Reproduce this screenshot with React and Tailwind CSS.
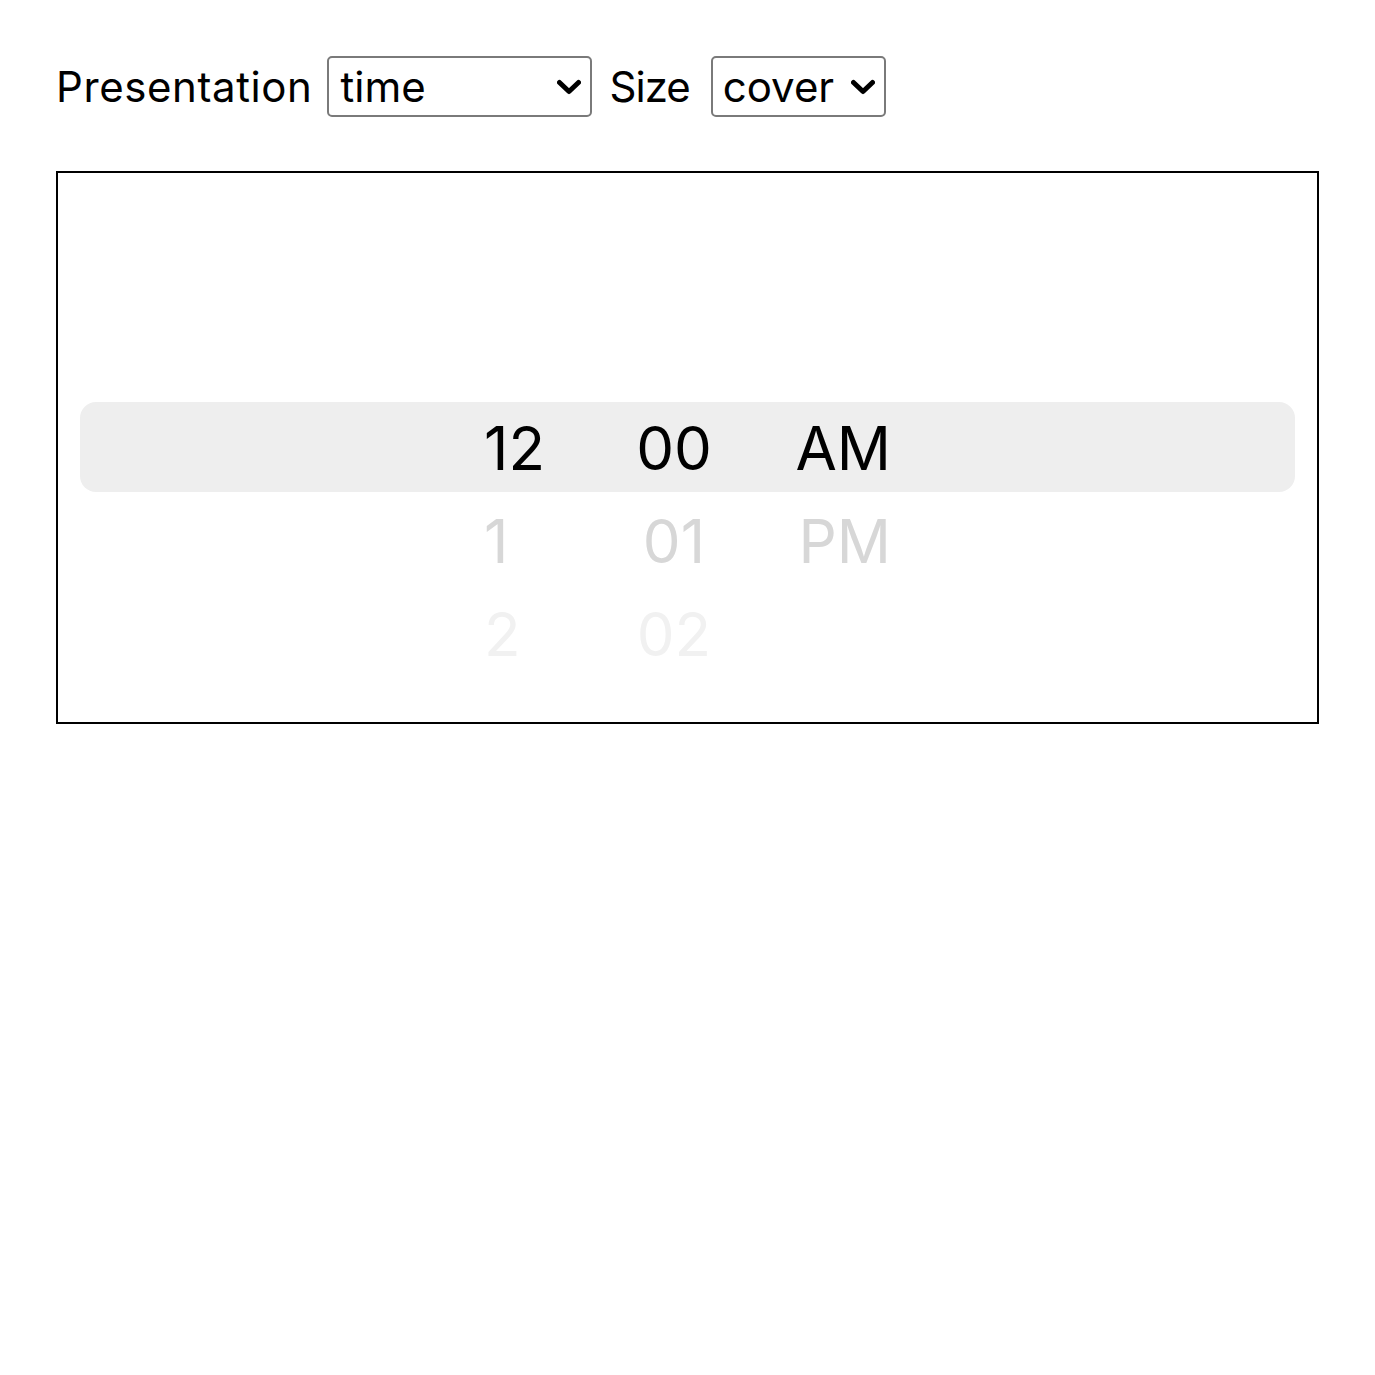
import React from "react";

const Chevron = () => (
  <svg width="24" height="16" viewBox="0 0 24 16" className="shrink-0">
    <polyline points="2.5,3.5 12,12.5 21.5,3.5" fill="none" stroke="#000" strokeWidth="5" strokeLinecap="round" strokeLinejoin="round" />
  </svg>
);

const FakeSelect = ({ value, width, textPad, chevPad }) => (
  <div
    className={`flex items-center justify-between h-[61px] border-2 border-[#7a7a7a] rounded-[5px] bg-white ${width} ${textPad} ${chevPad}`}
  >
    <span className="leading-none text-black">{value}</span>
    <Chevron />
  </div>
);

const hours = ["12", "1", "2"];
const minutes = ["00", "01", "02"];
const ampm = ["AM", "PM", ""];
const shades = ["text-black", "text-[#d7d7d7]", "text-[#f1f1f1]"];

const Column = ({ items, className }) => (
  <div className={`flex flex-col ${className}`}>
    {items.map((it, i) => (
      <div key={i} className={`h-[93px] leading-[93px] ${shades[i]}`}>
        {it}
      </div>
    ))}
  </div>
);

export default function App() {
  return (
    <div className="min-h-[1375px] bg-white px-14 pt-14 font-['Inter',sans-serif]">
      <div className="flex items-center h-[61px] leading-none text-[42px] text-black">
        <span className="mr-[14px] tracking-[0.6px]">Presentation</span>
        <FakeSelect value="time" width="w-[265px]" textPad="pl-[12px]" chevPad="pr-[9px]" />
        <span className="ml-[18px] mr-[21px] tracking-[-1px]">Size</span>
        <FakeSelect value="cover" width="w-[175px]" textPad="pl-[10px]" chevPad="pr-[9px]" />
      </div>

      <div className="relative mt-[54px] h-[553px] border-2 border-black overflow-hidden">
        <div className="absolute left-[22px] right-[22px] top-[229px] h-[90px] rounded-[16px] bg-[#eeeeee]" />
        <div className="relative flex justify-center pt-[229px] text-[60px]">
          <Column items={hours} className="w-[120px] text-left" />
          <Column items={minutes} className="w-[140px] text-center" />
          <Column items={ampm} className="w-[147px] text-right" />
        </div>
      </div>
    </div>
  );
}
